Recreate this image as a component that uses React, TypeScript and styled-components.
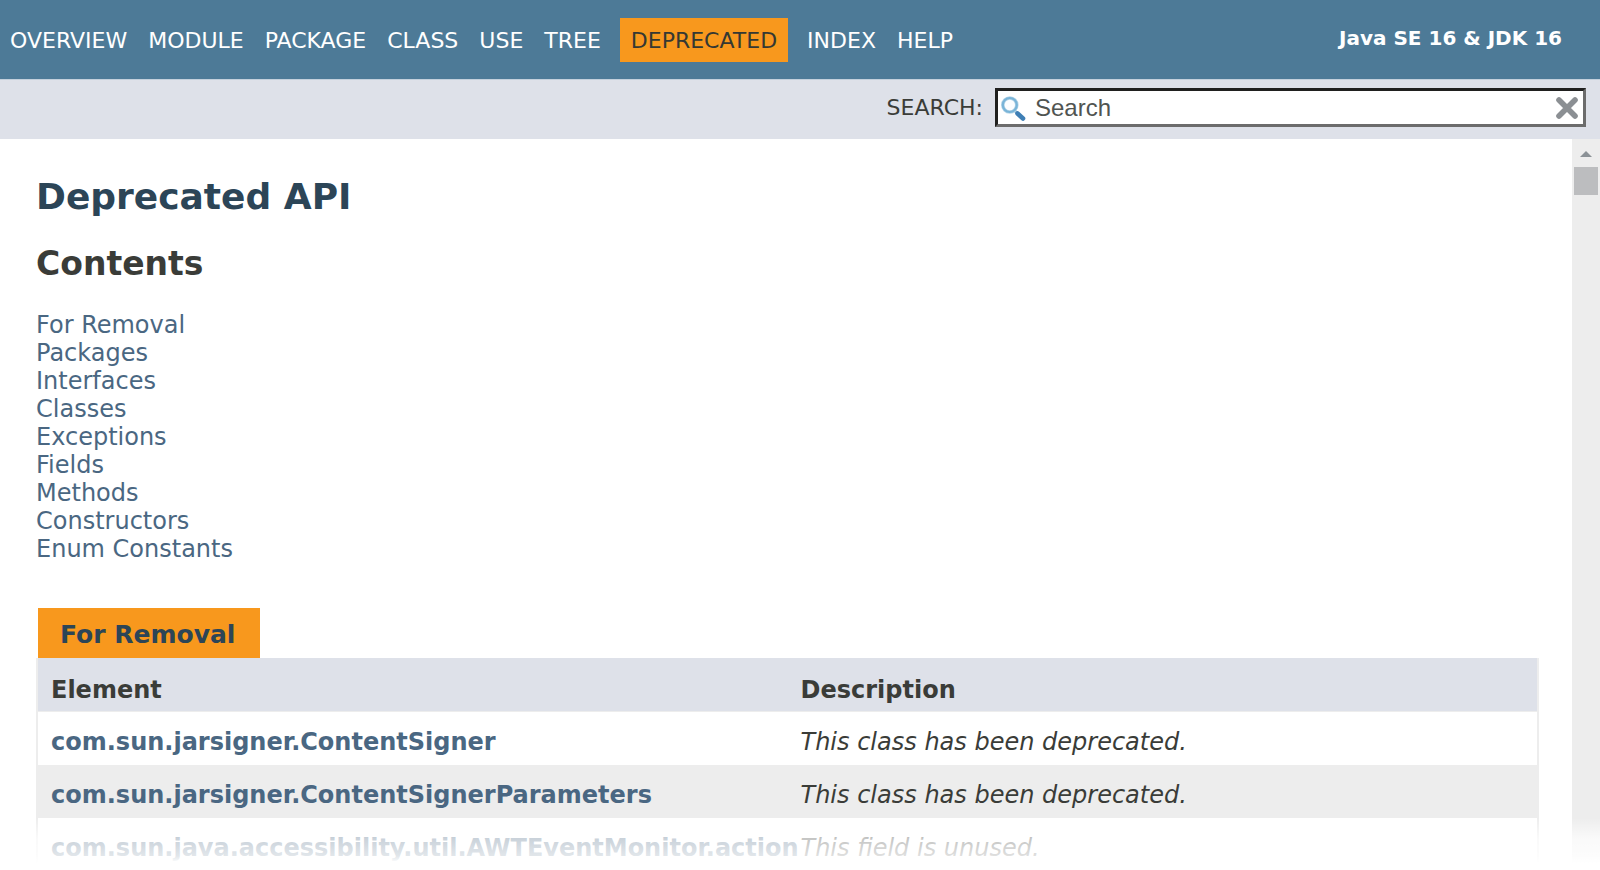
import React from "react";
import styled, { createGlobalStyle } from "styled-components";

const GlobalStyle = createGlobalStyle`
  *, *::before, *::after { box-sizing: border-box; }
  body {
    margin: 0;
    background: #ffffff;
    color: #3a3c38;
    font-family: "DejaVu Sans", Arial, Helvetica, sans-serif;
    font-size: 24px;
    line-height: 28px;
  }
`;

const Page = styled.div`
  position: relative;
  display: flex;
  flex-direction: column;
  height: 100vh;
  overflow: hidden;
`;

const TopNav = styled.nav`
  display: flex;
  flex: none;
  align-items: center;
  justify-content: space-between;
  height: 79px;
  padding-right: 38px;
  background: #4d7a97;
  color: #ffffff;
`;

const NavList = styled.ul`
  display: flex;
  align-items: center;
  gap: 1px;
  margin: 0;
  padding: 0;
  list-style: none;
`;

const NavLink = styled.a<{ $active?: boolean }>`
  display: block;
  margin: ${(p) => (p.$active ? "0 8px" : "0")};
  padding: ${(p) => (p.$active ? "9px 11px 7px" : "9px 10px 7px")};
  background: ${(p) => (p.$active ? "#f8981d" : "transparent")};
  color: ${(p) => (p.$active ? "#353833" : "#ffffff")};
  font-size: 22px;
  text-decoration: none;
  text-transform: uppercase;
`;

const Release = styled.strong`
  padding-bottom: 4px;
  font-size: 20px;
`;

const SubNav = styled.form`
  display: flex;
  flex: none;
  align-items: center;
  justify-content: flex-end;
  gap: 12px;
  height: 60px;
  padding: 0 14px 4px 0;
  border-top: 1px solid #c3d0dc;
  background: #dee1e9;
`;

const SearchLabel = styled.label`
  font-size: 22px;
`;

const SearchBox = styled.div`
  display: flex;
  align-items: center;
  width: 591px;
  height: 39px;
  padding: 0 5px 0 3px;
  border: 3px solid;
  border-color: #20201f #6c6c6c #6c6c6c #20201f;
  background: #ffffff;
`;

const SearchInput = styled.input`
  flex: 1;
  min-width: 0;
  height: 31px;
  padding: 0 8px;
  border: 0;
  outline: 0;
  background: transparent;
  color: #353833;
  font-family: "Liberation Sans", Arial, sans-serif;
  font-size: 24px;

  &::placeholder {
    color: #505451;
    opacity: 1;
  }
`;

const ClearButton = styled.button`
  display: flex;
  padding: 0;
  border: 0;
  background: none;
`;

const Body = styled.div`
  display: flex;
  flex: 1;
  min-height: 0;
`;

const Content = styled.main`
  flex: 1;
  min-width: 0;
  padding: 37px 33px 0 36px;
  overflow: hidden;
`;

const Title = styled.h1`
  margin: 0 0 25px;
  color: #2c4557;
  font-size: 36px;
  line-height: 42px;
`;

const Heading = styled.h2`
  margin: 0 0 26px;
  font-size: 33px;
  line-height: 42px;
`;

const ContentsList = styled.ul`
  margin: 0 0 45px;
  padding: 0;
  list-style: none;
`;

const TextLink = styled.a`
  color: #4a6782;
  text-decoration: none;
`;

const SummaryTable = styled.table`
  width: 100%;
  border: 2px solid #ededed;
  border-top: 0;
  border-spacing: 0;
  table-layout: fixed;
`;

const Caption = styled.caption`
  padding-left: 2px;
  text-align: left;
`;

const CaptionTab = styled.span`
  display: inline-block;
  padding: 13px 25px 9px 22px;
  background: #f8981d;
  color: #2c4557;
  font-size: 25px;
  font-weight: bold;
  vertical-align: top;
`;

const HeadCell = styled.th`
  height: 54px;
  padding: 18px 0 7px 13px;
  border-bottom: 1px solid #ededed;
  background: #dee1e9;
  text-align: left;
`;

const Row = styled.tr`
  background: #ffffff;

  &:nth-child(even) {
    background: #ededed;
  }
`;

const ElementCell = styled.th`
  padding: 16px 0 9px 13px;
  text-align: left;
  white-space: nowrap;
`;

const DescriptionCell = styled.td`
  padding: 16px 0 9px 13px;
  font-style: italic;
`;

const ScrollTrack = styled.div`
  display: flex;
  flex: none;
  flex-direction: column;
  align-items: center;
  gap: 10px;
  width: 28px;
  padding-top: 12px;
  background: #ededed;
`;

const ScrollThumb = styled.div`
  width: 24px;
  height: 28px;
  background: #bcbdbf;
`;

const Fade = styled.div`
  position: absolute;
  right: 0;
  bottom: 0;
  left: 0;
  height: 52px;
  background: linear-gradient(
    rgba(255, 255, 255, 0) 0,
    rgba(255, 255, 255, 0.7) 20px,
    rgba(255, 255, 255, 0.84) 38px,
    #ffffff 45px
  );
  pointer-events: none;
`;

const navItems = ["Overview", "Module", "Package", "Class", "Use", "Tree", "Deprecated", "Index", "Help"];

const sections = [
  "For Removal",
  "Packages",
  "Interfaces",
  "Classes",
  "Exceptions",
  "Fields",
  "Methods",
  "Constructors",
  "Enum Constants",
];

const removals = [
  { element: "com.sun.jarsigner.ContentSigner", description: "This class has been deprecated." },
  { element: "com.sun.jarsigner.ContentSignerParameters", description: "This class has been deprecated." },
  { element: "com.sun.java.accessibility.util.AWTEventMonitor.action", description: "This field is unused." },
];

const slug = (name: string) => name.toLowerCase().replace(/ /g, "-");

const Magnifier = () => (
  <svg width="26" height="26" viewBox="0 0 26 26" aria-hidden="true">
    <path d="M14 16l3 3" stroke="#9cc0da" strokeWidth="3" />
    <path d="M16.5 18.500l5.500 5" stroke="#3f7fb5" strokeWidth="4.600" strokeLinecap="round" />
    <circle cx="8.800" cy="10" r="7" fill="#fbfdff" stroke="#b5d5e8" strokeWidth="3.600" />
    <circle cx="8.800" cy="10" r="7" fill="none" stroke="#79b4d8" strokeWidth="2.200" />
  </svg>
);

const Cross = () => (
  <svg width="22" height="22" viewBox="0 0 22 22" aria-hidden="true">
    <path d="M3 3l16 16M19 3L3 19" stroke="#8b8f93" strokeWidth="5.600" strokeLinecap="round" />
  </svg>
);

export default function App() {
  return (
    <Page>
      <GlobalStyle />
      <TopNav>
        <NavList>
          {navItems.map((item) => (
            <li key={item}>
              <NavLink href={`#${slug(item)}`} $active={item === "Deprecated"}>
                {item}
              </NavLink>
            </li>
          ))}
        </NavList>
        <Release>Java SE 16 &amp; JDK 16</Release>
      </TopNav>
      <SubNav role="search" onSubmit={(e) => e.preventDefault()}>
        <SearchLabel htmlFor="search">SEARCH:</SearchLabel>
        <SearchBox>
          <Magnifier />
          <SearchInput id="search" type="text" placeholder="Search" />
          <ClearButton type="reset" aria-label="Clear">
            <Cross />
          </ClearButton>
        </SearchBox>
      </SubNav>
      <Body>
        <Content>
          <Title>Deprecated API</Title>
          <Heading>Contents</Heading>
          <ContentsList>
            {sections.map((name) => (
              <li key={name}>
                <TextLink href={`#${slug(name)}`}>{name}</TextLink>
              </li>
            ))}
          </ContentsList>
          <SummaryTable>
            <Caption>
              <CaptionTab>For Removal</CaptionTab>
            </Caption>
            <thead>
              <tr>
                <HeadCell scope="col">Element</HeadCell>
                <HeadCell scope="col">Description</HeadCell>
              </tr>
            </thead>
            <tbody>
              {removals.map((row) => (
                <Row key={row.element}>
                  <ElementCell scope="row">
                    <TextLink href={`#${row.element}`}>{row.element}</TextLink>
                  </ElementCell>
                  <DescriptionCell>{row.description}</DescriptionCell>
                </Row>
              ))}
            </tbody>
          </SummaryTable>
        </Content>
        <ScrollTrack aria-hidden="true">
          <svg width="12" height="6" viewBox="0 0 12 6">
            <path d="M6 0l6 6H0z" fill="#8b9196" />
          </svg>
          <ScrollThumb />
        </ScrollTrack>
      </Body>
      <Fade />
    </Page>
  );
}
